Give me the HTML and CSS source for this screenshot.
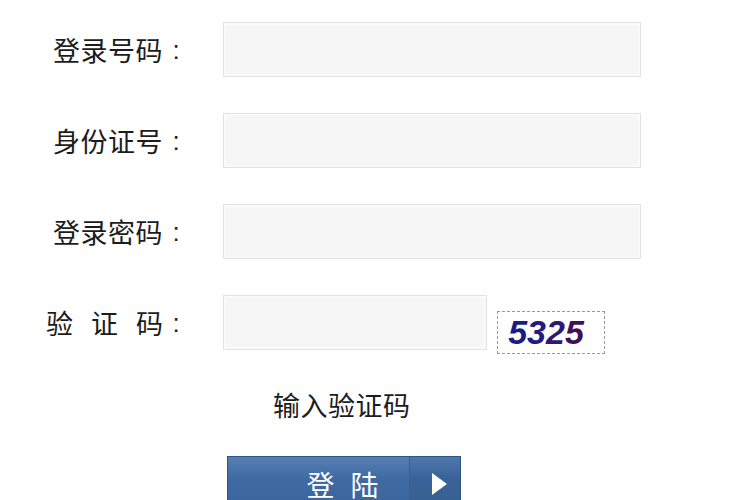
FILE: index.html
```html
<!DOCTYPE html>
<html lang="zh-CN">
<head>
<meta charset="utf-8">
<title>登录</title>
<link rel="stylesheet" href="styles.css">
</head>
<body>
<form class="login">
  <div class="row">
    <div class="label"><span class="txt">登录号码</span><span class="colon">:</span></div>
    <div class="field"></div>
  </div>
  <div class="row">
    <div class="label"><span class="txt">身份证号</span><span class="colon">:</span></div>
    <div class="field"></div>
  </div>
  <div class="row">
    <div class="label"><span class="txt">登录密码</span><span class="colon">:</span></div>
    <div class="field"></div>
  </div>
  <div class="row">
    <div class="label"><span class="txt spaced"><span>验</span><span>证</span><span>码</span></span><span class="colon">:</span></div>
    <div class="field short"></div>
    <div class="captcha"><span class="d1">5</span><span class="d2">3</span><span class="d3">2</span><span class="d4">5</span></div>
  </div>
  <div class="hint">输入验证码</div>
  <div class="btn">
    <span class="btn-main">登陆</span>
    <span class="btn-arrow"><span class="tri"></span></span>
  </div>
</form>
</body>
</html>
```

FILE: styles.css
```css
html, body {
  margin: 0;
  padding: 0;
  background: #ffffff;
  overflow: hidden;
}
body {
  width: 750px;
  height: 500px;
  font-family: "Noto Sans CJK SC", "Noto Sans", sans-serif;
  color: #1c1c1c;
}
.login {
  display: flex;
  flex-direction: column;
  padding-top: 22px;
}
.row {
  display: flex;
  align-items: center;
  height: 55px;
  margin-bottom: 36px;
}
.row:nth-child(4) {
  margin-bottom: 0;
}
.label {
  width: 184px;
  margin-right: 39px;
  display: flex;
  justify-content: flex-end;
  align-items: center;
  font-size: 27px;
  line-height: 34px;
}
.txt {
  letter-spacing: 0.5px;
}
.spaced {
  display: flex;
  gap: 18px;
  letter-spacing: 0;
}
.colon {
  width: 16px;
  margin-left: 5px;
  text-align: center;
  font-family: "Liberation Sans", sans-serif;
  font-size: 26px;
}
.field {
  width: 416px;
  height: 53px;
  border: 1px solid #e2e2e2;
  background: #f6f6f6;
  box-shadow: inset 0 0 0 2px #fafafa;
}
.field.short {
  width: 262px;
}
.captcha {
  align-self: flex-end;
  margin-left: 10px;
  margin-bottom: -4px;
  width: 106px;
  height: 41px;
  padding-right: 10px;
  box-sizing: content-box;
  width: 96px;
  border: 1px dashed #9a9a9a;
  display: flex;
  align-items: center;
  justify-content: center;
  font-family: "Liberation Sans", sans-serif;
  font-weight: bold;
  font-style: italic;
  font-size: 34px;
  line-height: 41px;
}
.d1 { color: #1c1a86; }
.d2 { color: #231a84; }
.d3 { color: #2d1876; }
.d4 { color: #3f1054; }
.hint {
  margin-top: 38px;
  padding-left: 273px;
  font-size: 27px;
  line-height: 34px;
  letter-spacing: 0.5px;
}
.btn {
  margin-top: 34px;
  margin-left: 227px;
  width: 234px;
  height: 56px;
  display: flex;
  border: 1px solid #2e5487;
  box-sizing: border-box;
  background: linear-gradient(#5680b4, #3f6ba2 40%, #3a659c);
}
.btn-main {
  flex: 1;
  display: flex;
  align-items: center;
  justify-content: center;
  padding-left: 64px;
  color: #ffffff;
  font-size: 28px;
  line-height: 32px;
  letter-spacing: 16px;
}
.btn-arrow {
  width: 50px;
  display: flex;
  align-items: center;
  justify-content: center;
  border-left: 1px solid #35609a;
  background: linear-gradient(#4f78aa, #3a6299 40%, #36608f);
}
.tri {
  width: 0;
  height: 0;
  border-top: 11px solid transparent;
  border-bottom: 11px solid transparent;
  border-left: 15px solid #ffffff;
  margin-left: 8px;
}
```
